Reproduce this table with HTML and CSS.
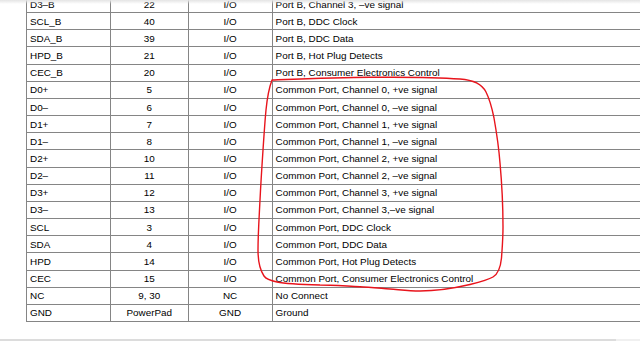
FILE: index.html
```html
<!DOCTYPE html>
<html>
<head>
<meta charset="utf-8">
<link rel="stylesheet" href="styles.css">
</head>
<body>
<div class="viewer">
  <div class="page">
    <table class="pins">
      <colgroup>
        <col class="c-name"><col class="c-no"><col class="c-io"><col class="c-desc">
      </colgroup>
      <tbody>
        <tr><td>D3–B</td><td class="ctr">22</td><td class="ctr">I/O</td><td>Port B, Channel 3, –ve signal</td></tr>
        <tr><td>SCL_B</td><td class="ctr">40</td><td class="ctr">I/O</td><td>Port B, DDC Clock</td></tr>
        <tr><td>SDA_B</td><td class="ctr">39</td><td class="ctr">I/O</td><td>Port B, DDC Data</td></tr>
        <tr><td>HPD_B</td><td class="ctr">21</td><td class="ctr">I/O</td><td>Port B, Hot Plug Detects</td></tr>
        <tr><td>CEC_B</td><td class="ctr">20</td><td class="ctr">I/O</td><td>Port B, Consumer Electronics Control</td></tr>
        <tr><td>D0+</td><td class="ctr">5</td><td class="ctr">I/O</td><td>Common Port, Channel 0, +ve signal</td></tr>
        <tr><td>D0–</td><td class="ctr">6</td><td class="ctr">I/O</td><td>Common Port, Channel 0, –ve signal</td></tr>
        <tr><td>D1+</td><td class="ctr">7</td><td class="ctr">I/O</td><td>Common Port, Channel 1, +ve signal</td></tr>
        <tr><td>D1–</td><td class="ctr">8</td><td class="ctr">I/O</td><td>Common Port, Channel 1, –ve signal</td></tr>
        <tr><td>D2+</td><td class="ctr">10</td><td class="ctr">I/O</td><td>Common Port, Channel 2, +ve signal</td></tr>
        <tr><td>D2–</td><td class="ctr">11</td><td class="ctr">I/O</td><td>Common Port, Channel 2, –ve signal</td></tr>
        <tr><td>D3+</td><td class="ctr">12</td><td class="ctr">I/O</td><td>Common Port, Channel 3, +ve signal</td></tr>
        <tr><td>D3–</td><td class="ctr">13</td><td class="ctr">I/O</td><td>Common Port, Channel 3,–ve signal</td></tr>
        <tr><td>SCL</td><td class="ctr">3</td><td class="ctr">I/O</td><td>Common Port, DDC Clock</td></tr>
        <tr><td>SDA</td><td class="ctr">4</td><td class="ctr">I/O</td><td>Common Port, DDC Data</td></tr>
        <tr><td>HPD</td><td class="ctr">14</td><td class="ctr">I/O</td><td>Common Port, Hot Plug Detects</td></tr>
        <tr><td>CEC</td><td class="ctr">15</td><td class="ctr">I/O</td><td>Common Port, Consumer Electronics Control</td></tr>
        <tr><td>NC</td><td class="ctr">9, 30</td><td class="ctr">NC</td><td>No Connect</td></tr>
        <tr><td>GND</td><td class="ctr">PowerPad</td><td class="ctr">GND</td><td>Ground</td></tr>
      </tbody>
    </table>
  </div>
  <div class="top-shade"></div>
  <svg class="markup" width="640" height="341" viewBox="0 0 640 341">
    <path d="M272,80 C300,79 340,77.5 370,77.3 C405,77 440,77.5 460,79 C474,80 482,84 486,92 C490,100 492,108 494,118 C497,135 499,150 500,163 C502,185 503,210 503,227 C503,240 502,250 501.5,258 C500.5,268 498,274 493,277 C488,280 480,282 470,284.5 C455,288 435,291 420,291 C408,291 398,289.5 390,289 C378,288 368,287 360,286.7 C345,286 330,285 320,285 C300,284.5 284,283.5 277,282 C270,280.5 266,279 264,276 C260,270 258,262 258,250 C258,235 259,220 260,200 C261,180 262,165 263,150 C264,135 265,120 266,110 C267,100 269,88 272,80 Z" fill="none" stroke="#e8141c" stroke-width="1.4" stroke-linejoin="round"/>
  </svg>
</div>
<div class="hscroll"><div class="thumb"></div></div>
</body>
</html>
```

FILE: styles.css
```css
html, body {
  margin: 0;
  padding: 0;
  background: #ffffff;
  overflow: hidden;
}
body {
  width: 640px;
  height: 341px;
  display: flex;
  flex-direction: column;
  font-family: "Liberation Sans", Arial, sans-serif;
}
.viewer {
  position: relative;
  flex: 1;
  overflow: hidden;
}
.page {
  padding-left: 26px;
  margin-top: -5px;
}
.pins {
  border-collapse: collapse;
  table-layout: fixed;
  width: 720px;
  font-size: 9.9px;
  color: #000000;
}
.c-name { width: 84px; }
.c-no { width: 77.6px; }
.c-io { width: 84px; }
.pins td {
  border: 1px solid #858585;
  height: 16.17px;
  padding: 0 3px;
  vertical-align: middle;
  line-height: 11px;
  white-space: nowrap;
  overflow: hidden;
}
.pins td.ctr { text-align: center; }
.top-shade {
  position: absolute;
  left: 0;
  top: 0;
  width: 100%;
  height: 4px;
  background: linear-gradient(#e4e4e4, rgba(255,255,255,0));
}
.markup {
  position: absolute;
  left: 0;
  top: 0;
  pointer-events: none;
}
.hscroll {
  height: 2px;
  background: #f0f0f0;
  display: flex;
}
.thumb {
  width: 616px;
  background: #dcdcdc;
}
```
